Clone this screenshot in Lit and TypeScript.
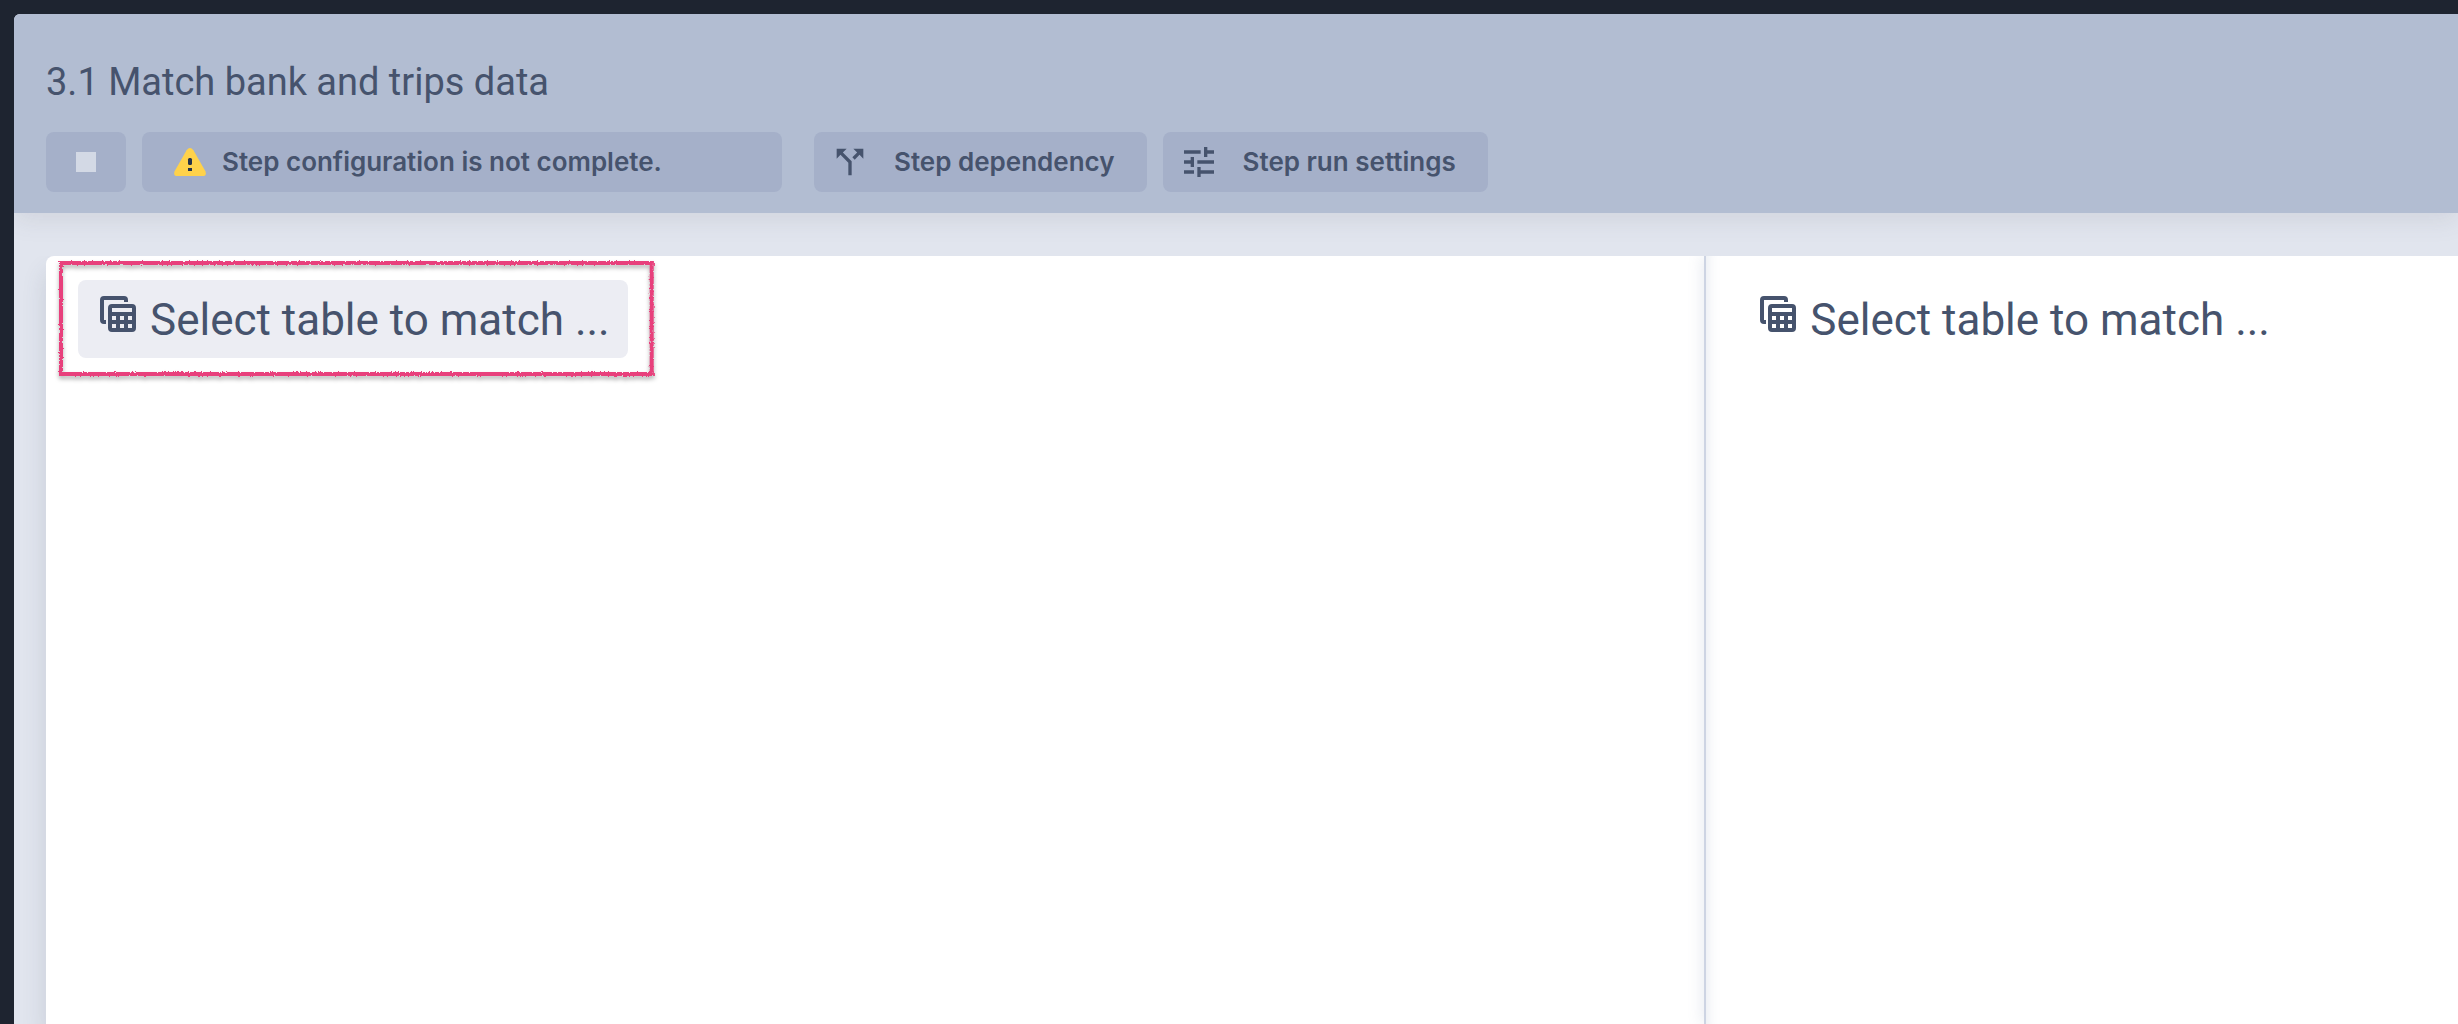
import { LitElement, html, css, svg } from "lit";
import { customElement, property } from "lit/decorators.js";
import { classMap } from "lit/directives/class-map.js";

const splitIcon = svg`<path d="M14 4l2.29 2.29-2.88 2.88 1.42 1.42 2.88-2.88L20 10V4h-6zm-4 0H4v6l2.29-2.29 4.71 4.7V20h2v-8.41l-5.29-5.3L10 4z"/>`;
const tuneIcon = svg`<path d="M3 17v2h6v-2H3zM3 5v2h10V5H3zm10 16v-2h8v-2h-8v-2h-2v6h2zM7 9v2H3v2h4v2h2V9H7zm14 4v-2H11v2h10zm-6-4h2V7h4V5h-4V3h-2v6z"/>`;

@customElement("table-picker")
export class TablePicker extends LitElement {
  static styles = css`
    :host {
      display: block;
    }
    .picker {
      display: flex;
      align-items: flex-start;
      gap: 14px;
      padding: 16px 18px 14px 22px;
      border: 0;
      border-radius: 8px;
      background: transparent;
      color: #46536d;
      font: 400 44px/48px Roboto, "Liberation Sans", sans-serif;
      white-space: nowrap;
      cursor: pointer;
    }
    .picker.active {
      background: #ecedf3;
    }
    .icon {
      flex: none;
      width: 36px;
      height: 36px;
      fill: currentColor;
    }
  `;

  @property({ type: Boolean }) active = false;

  render() {
    return html`
      <button type="button" class=${classMap({ picker: true, active: this.active })}>
        <svg class="icon" viewBox="0 0 36 36" aria-hidden="true">
          <path d="M4 0H24a4 4 0 0 1 4 4V6H24V4H4V24H6V28H4a4 4 0 0 1-4-4V4a4 4 0 0 1 4-4z" />
          <path
            fill-rule="evenodd"
            d="M12 8H32a4 4 0 0 1 4 4V32a4 4 0 0 1-4 4H12a4 4 0 0 1-4-4V12a4 4 0 0 1 4-4zM12 12V16H32V12zM12 20V24H16V20zM20 20V24H24V20zM28 20V24H32V20zM12 28V32H16V28zM20 28V32H24V28zM28 28V32H32V28z"
          />
        </svg>
        <span>Select table to match ...</span>
      </button>
    `;
  }
}

@customElement("app-root")
export class AppRoot extends LitElement {
  static styles = css`
    :host {
      display: block;
      font-family: Inter, "Liberation Sans", sans-serif;
      color: #46536d;
    }
    * {
      box-sizing: border-box;
    }
    .page {
      display: flex;
      min-height: 100vh;
      padding: 14px 0 0 14px;
      background: #1e2430;
    }
    .window {
      flex: 1;
      min-width: 0;
      display: flex;
      flex-direction: column;
      overflow: hidden;
      border-top-left-radius: 6px;
      background: #e1e5ee;
    }
    .header {
      display: flex;
      flex-direction: column;
      gap: 26px;
      padding: 44px 32px 21px;
      background: #b2bdd2;
      box-shadow: 0 6px 24px rgba(80, 85, 95, 0.12);
    }
    .title {
      margin: 0;
      font-family: Roboto, "Liberation Sans", sans-serif;
      font-size: 38px;
      line-height: 48px;
      font-weight: 400;
    }
    .toolbar {
      display: flex;
      gap: 16px;
      font-size: 26px;
      line-height: 32px;
      font-weight: 600;
    }
    .chip {
      display: flex;
      align-items: center;
      height: 60px;
      margin: 0;
      border: 0;
      border-radius: 8px;
      background: #a5b0c9;
      color: inherit;
      font: inherit;
      white-space: nowrap;
    }
    .stop {
      justify-content: center;
      width: 80px;
      padding: 0;
    }
    .stop-mark {
      width: 20px;
      height: 20px;
      background: #d3d9e5;
    }
    .status {
      gap: 16px;
      width: 640px;
      margin-right: 16px;
      padding: 0 32px;
    }
    .warning {
      width: 32px;
      height: 28px;
    }
    .action {
      gap: 24px;
      padding: 0 32px 0 16px;
      cursor: pointer;
    }
    .icon {
      width: 40px;
      height: 40px;
      fill: currentColor;
    }
    .content {
      flex: 1;
      display: grid;
      grid-template-columns: 11fr 5fr;
      margin: 43px 0 0 32px;
      border-top-left-radius: 8px;
      background: #fff;
      box-shadow: 0 16px 24px rgba(70, 80, 100, 0.16);
      clip-path: inset(0 0 0 -32px);
    }
    .pane {
      display: flex;
      align-items: flex-start;
      padding: 24px 32px;
    }
    .pane.second {
      border-left: 2px solid #cdd4e3;
      box-shadow: -2px 0 14px rgba(110, 130, 170, 0.16), inset 14px 0 14px -14px rgba(110, 130, 170, 0.22);
    }
    .marked {
      position: relative;
    }
    .annotation {
      position: absolute;
      inset: -19px -26px -18px -19px;
      pointer-events: none;
      filter: drop-shadow(0 3px 2px rgba(0, 0, 0, 0.3));
    }
    .annotation svg {
      display: block;
      width: 100%;
      height: 100%;
      overflow: visible;
    }
  `;

  render() {
    return html`
      <div class="page">
        <main class="window">
          <header class="header">
            <h1 class="title">3.1 Match bank and trips data</h1>
            <div class="toolbar">
              <button type="button" class="chip stop" aria-label="Stop">
                <span class="stop-mark"></span>
              </button>
              <div class="chip status" role="status">
                <svg class="warning" viewBox="0 0 32 28" aria-hidden="true">
                  <path
                    fill="#ffd24a"
                    d="M12.6 2.2Q16-2.2 19.4 2.2L31.4 23.2Q33 28 28.6 28H3.4Q-1 28 .6 23.2z"
                  />
                  <rect x="14" y="10" width="4" height="7" rx="1.5" fill="#27334a" />
                  <rect x="14" y="20" width="4" height="3" fill="#27334a" />
                </svg>
                <span>Step configuration is not complete.</span>
              </div>
              <button type="button" class="chip action">
                <svg class="icon" viewBox="0 0 24 24" aria-hidden="true">${splitIcon}</svg>
                <span>Step dependency</span>
              </button>
              <button type="button" class="chip action">
                <svg class="icon" viewBox="0 0 24 24" aria-hidden="true">${tuneIcon}</svg>
                <span>Step run settings</span>
              </button>
            </div>
          </header>
          <div class="content">
            <section class="pane">
              <div class="marked">
                <table-picker active></table-picker>
                <div class="annotation">
                  <svg aria-hidden="true">
                    <filter id="chalk" x="-2%" y="-6%" width="104%" height="112%">
                      <feTurbulence type="fractalNoise" baseFrequency="0.6" numOctaves="2" seed="4" result="noise" />
                      <feDisplacementMap in="SourceGraphic" in2="noise" scale="3" xChannelSelector="R" yChannelSelector="G" />
                    </filter>
                    <g filter="url(#chalk)" fill="#e8417c">
                      <rect width="100%" height="4" />
                      <rect y="100%" width="100%" height="4" style="transform: translateY(-4px)" />
                      <rect width="4" height="100%" />
                      <rect x="100%" width="4" height="100%" style="transform: translateX(-4px)" />
                    </g>
                  </svg>
                </div>
              </div>
            </section>
            <section class="pane second">
              <table-picker></table-picker>
            </section>
          </div>
        </main>
      </div>
    `;
  }
}
